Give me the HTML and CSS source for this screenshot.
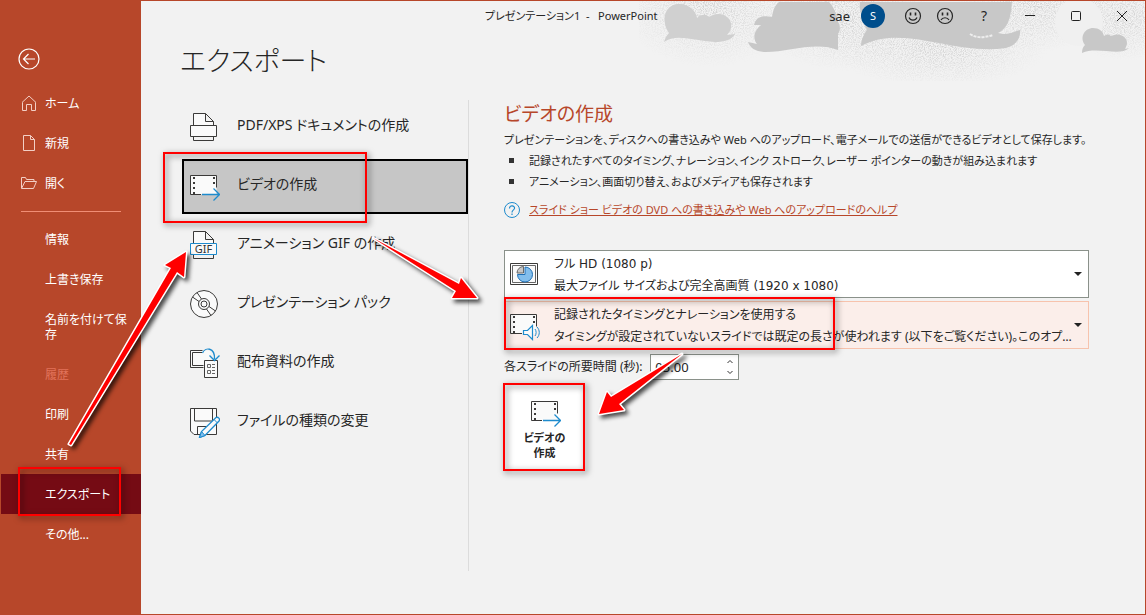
FILE: index.html
```html
<!DOCTYPE html>
<html lang="ja">
<head>
<meta charset="utf-8">
<meta name="viewport" content="width=device-width, initial-scale=1">
<title>プレゼンテーション1 - PowerPoint</title>
<link rel="stylesheet" href="styles.css">
</head>
<body>
<svg class="defs" aria-hidden="true">
  <defs>
    <symbol id="film-arrow" viewBox="0 0 32 32">
      <path d="M2.500 5.500h26v19h-26z" fill="#fafafa" stroke="none"/>
      <path d="M13 24.500H2.500v-19h26v12" fill="none" stroke="#3b3a39"/>
      <path d="M6 7v17M26 7v10" fill="none" stroke="#3b3a39" stroke-width="2" stroke-dasharray="2 3"/>
      <path d="M14 24.500h17M25.500 18.500l6 6-6 6" fill="none" stroke="#1e8bcd" stroke-width="1.300"/>
    </symbol>
  </defs>
</svg>
<div class="window">
  <nav class="sidebar" aria-label="ファイル">
    <button class="back" type="button" aria-label="戻る">
      <svg width="22" height="22" viewBox="0 0 22 22" fill="none" stroke="#fff" stroke-width="1.200"><circle cx="11" cy="11" r="10"/><path d="M17 11H6M10.500 6L5.500 11l5 5"/></svg>
    </button>
    <a class="nav-item" href="#home"><svg width="16" height="16" viewBox="0 0 16 16" fill="none" stroke="#f3cfc5"><path d="M1 7.500L8 1l7 6.500M1.500 7.500v8h4v-6h5v6h4v-8"/></svg>ホーム</a>
    <a class="nav-item" href="#new"><svg width="16" height="16" viewBox="0 0 16 16" fill="none" stroke="#f3cfc5"><path d="M2.500.5h7l4 4v11h-11zM9.500.5v4h4"/></svg>新規</a>
    <a class="nav-item" href="#open"><svg width="16" height="16" viewBox="0 0 16 16" fill="none" stroke="#f3cfc5"><path d="M.5 13V2.500h4l1 2h7.500v2M.5 13.500L4 6.500h11.500l-3 7z"/></svg>開く</a>
    <hr class="nav-line">
    <a class="nav-item text-only" href="#info">情報</a>
    <a class="nav-item text-only" href="#save">上書き保存</a>
    <a class="nav-item text-only" href="#saveas">名前を付けて保存</a>
    <a class="nav-item text-only disabled" aria-disabled="true" href="#history">履歴</a>
    <a class="nav-item text-only" href="#print">印刷</a>
    <a class="nav-item text-only" href="#share">共有</a>
    <a class="nav-item text-only current" aria-current="page" href="#export">エクスポート</a>
    <a class="nav-item text-only" href="#more">その他...</a>
  </nav>

  <div class="main">
    <svg class="clouds" viewBox="0 0 506 80" width="506" height="80" aria-hidden="true">
      <defs>
        <filter id="grain" x="0" y="0" width="100%" height="100%">
          <feTurbulence type="fractalNoise" baseFrequency=".9" numOctaves="2" seed="4"/>
          <feColorMatrix values="0 0 0 0 .6  0 0 0 0 .6  0 0 0 0 .6  3 0 0 0 -1.200"/>
          <feComposite in2="SourceGraphic" operator="in"/>
        </filter>
        <radialGradient id="fade"><stop offset="0" stop-color="#000" stop-opacity=".9"/><stop offset="1" stop-color="#000" stop-opacity="0"/></radialGradient>
      </defs>
      <g filter="url(#grain)">
        <ellipse cx="70" cy="6" rx="90" ry="60" fill="url(#fade)"/>
        <ellipse cx="205" cy="15" rx="90" ry="55" fill="url(#fade)"/>
        <ellipse cx="300" cy="45" rx="110" ry="42" fill="url(#fade)"/>
        <ellipse cx="395" cy="6" rx="80" ry="45" fill="url(#fade)"/>
        <ellipse cx="485" cy="15" rx="60" ry="45" fill="url(#fade)"/>
      </g>
      <circle cx="440" cy="21" r="24" fill="#f0f0f0"/>
      <path d="M25 41c1-4 3-7 5-9C22 20 25 5 38 3c12-1 19 7 20 14 4-4 9-4 12-1 8-6 20-3 22 6 1 5-1 9-4 12l8-1c-3 6-11 8-20 8-22-1-38-9-51 0z" fill="#d0d0d0"/>
      <path d="M115 24c2-9 10-10 18-8 1-7 3-12 7-15h50c5 5 8 13 9 20 2 3 3 8 0 12 0 4 0 9 0 16-22-9-50 2-72 2-10 0-16-4-18-10l9 2c-4-5-4-12 4-19z" fill="#c8c8c8"/>
      <path d="M221 1h152c-1 17-5 27-14 31 10 3 17-2 22-3 1 9-5 16-14 18-51 8-103-25-145-2 0-6 3-12 6-16-4-9-8-18-7-28z" fill="#c8c8c8"/>
      <path d="M331 33c7 5 17 3 23 1" fill="none" stroke="#eee" stroke-width="2" stroke-dasharray="3 1"/>
      <path d="M443 52c0-4 1-6 3-8-6-8 0-17 8-17 6 0 10 3 11 8 3-2 5-2 7 0 8-4 16 0 16 7 0 2-1 4-2 6l4-1c-9 9-32-2-47 5z" fill="#c8c8c8"/>
    </svg>

    <header class="titlebar">
      <div class="doc-name">プレゼンテーション1&nbsp; -&nbsp;&nbsp; PowerPoint</div>
      <div class="account"><span>sae</span><span class="avatar">S</span></div>
      <button class="face" type="button" aria-label="スマイル"><svg width="18" height="18" viewBox="0 0 18 18" fill="none" stroke="#262626" stroke-width="1.200"><circle cx="9" cy="9" r="7.500"/><path d="M5 10.500c1.500 3.500 6.500 3.500 8 0"/><path d="M6.500 5.500v3M11.500 5.500v3" stroke-width="1.600"/></svg></button>
      <button class="face" type="button" aria-label="しかめ面"><svg width="18" height="18" viewBox="0 0 18 18" fill="none" stroke="#262626" stroke-width="1.200"><circle cx="9" cy="9" r="7.500"/><path d="M5 13c1.500-3 6.500-3 8 0"/><path d="M6.500 5.500v3M11.500 5.500v3" stroke-width="1.600"/></svg></button>
      <button class="win" type="button" aria-label="ヘルプ">?</button>
      <button class="win" type="button" aria-label="最小化"><svg width="12" height="12" viewBox="0 0 12 12"><path d="M1 5.500h10" stroke="#222"/></svg></button>
      <button class="win" type="button" aria-label="最大化"><svg width="12" height="12" viewBox="0 0 12 12"><rect x="1.500" y="1.500" width="9" height="9" rx="1" fill="none" stroke="#222"/></svg></button>
      <button class="win" type="button" aria-label="閉じる"><svg width="12" height="12" viewBox="0 0 12 12"><path d="M1 1l10 10M11 1L1 11" stroke="#222"/></svg></button>
    </header>

    <h1 class="page-title">エクスポート</h1>

    <div class="columns">
      <div class="export-list">
        <button class="export-item" type="button"><svg width="32" height="32" viewBox="0 0 32 32" fill="#fafafa" stroke="#3b3a39"><path d="M5.500 15V2.500h12l8 8V15M17.500 2.500v8h8"/><path d="M2.500 14.500h26v11h-26z"/><path d="M5.500 26v3.500h20V26" fill="none"/></svg><span>PDF/XPS ドキュメントの作成</span></button>
        <button class="export-item selected" type="button"><svg width="32" height="32"><use href="#film-arrow"/></svg><span>ビデオの作成</span></button>
        <button class="export-item" type="button"><svg width="32" height="32" viewBox="0 0 32 32" fill="#fafafa" stroke="#3b3a39"><path d="M5.500 14V2.500h12l8 8V14M17.500 2.500v8h8"/><path d="M5.500 25v4.500h20V25" fill="none"/><path d="M2.500 14.500h26v11h-26z" stroke="#1e8bcd"/><text class="gif" x="15.500" y="24" text-anchor="middle">GIF</text></svg><span>アニメーション GIF の作成</span></button>
        <button class="export-item" type="button"><svg width="32" height="32" viewBox="0 0 32 32" fill="none" stroke="#3b3a39"><circle cx="16" cy="16" r="13.500" fill="#fafafa"/><circle cx="16" cy="16" r="5.500"/><circle cx="16" cy="16" r="3"/><path d="M9 4.500l4.500 6.500M4.500 9l6.500 4.500M23 27.500L18.500 21M27.500 23L21 18.500"/></svg><span>プレゼンテーション パック</span></button>
        <button class="export-item" type="button"><svg width="32" height="32" viewBox="0 0 32 32" fill="none" stroke="#3b3a39"><path d="M2.500 3.500h20v17h-20z" fill="#fafafa" stroke="none"/><path d="M14.500 3.500h-12v17h13M14 5.500H4.500v13h11"/><path d="M16.500 13.500h13v17h-13z" fill="#fafafa"/><path d="M19.500 17.500h3v3h-3zM19.500 23.500h3v3h-3zM24 17.500h3M24 20.500h3M24 23.500h3M24 26.500h3" stroke="#666"/><path d="M14.500 6C17 0 27 0 26.500 12M21.500 8.500l5 5 5-5" stroke="#1e8bcd" stroke-width="1.300"/></svg><span>配布資料の作成</span></button>
        <button class="export-item" type="button"><svg width="32" height="32" viewBox="0 0 32 32" fill="none" stroke="#3b3a39"><path d="M2.500 2.500h26v26H6l-3.500-3.500z" fill="#fafafa"/><path d="M6.500 3v12h18V3M9.500 28v-7.500h12"/><path d="M11.500 31.500l2-6L28 11.500c2-1 4.500 1.500 3 3.500L17 29.500z" fill="#fafafa" stroke="#1e8bcd" stroke-width="1.300"/><path d="M11.500 31.500l2-6 3.500 4z" fill="#83beec" stroke="#1e8bcd"/><path d="M26 13.500l3.500 3.500" stroke="#1e8bcd"/></svg><span>ファイルの種類の変更</span></button>
      </div>

      <section class="detail">
        <h2>ビデオの作成</h2>
        <p class="lead">プレゼンテーションを、ディスクへの書き込みや Web へのアップロード、電子メールでの送信ができるビデオとして保存します。</p>
        <ul class="notes">
          <li>記録されたすべてのタイミング、ナレーション、インク ストローク、レーザー ポインターの動きが組み込まれます</li>
          <li>アニメーション、画面切り替え、およびメディアも保存されます</li>
        </ul>
        <div class="help">
          <svg width="16" height="16" viewBox="0 0 16 16" fill="none" stroke="#1e8bcd"><circle cx="8" cy="8" r="7.500"/><path d="M5.500 6.500c0-4 5.500-3 5 0-.3 1.500-2.500 1.500-2.500 4M8 11.500v1.500" stroke-width="1.200"/></svg>
          <a href="#help">スライド ショー ビデオの DVD への書き込みや Web へのアップロードのヘルプ</a>
        </div>

        <div class="combo">
          <svg class="combo-icon" width="32" height="32" viewBox="0 0 32 32" fill="none" stroke="#3b3a39"><path d="M2.500 5.500h27v21h-27z" fill="#fff"/><path d="M4.500 7.500h23v17h-23z" fill="#fafafa" stroke="#666"/><path d="M17 9a7.500 7.500 0 1 1-7.500 7.500H17z" fill="#83beec" stroke="#1e6fb5"/><path d="M15.500 15V8.500A6.500 6.500 0 0 0 9 15z" fill="#c8c8c8" stroke="#666"/></svg>
          <select aria-label="ビデオの品質"><option>フル HD (1080 p)</option></select>
          <span class="combo-note">最大ファイル サイズおよび完全高画質 (1920 x 1080)</span>
        </div>
        <div class="combo hot">
          <svg class="combo-icon" width="32" height="32" viewBox="0 0 32 32" fill="none" stroke="#3b3a39"><path d="M2.500 5.500h26v19h-26z" fill="#fafafa" stroke="none"/><path d="M14 24.500H2.500v-19h26v12"/><path d="M6 7v17M26 7v9" stroke-width="2" stroke-dasharray="2 3"/><path d="M15.500 21.500h4l5-5v14l-5-5h-4z" fill="#fafafa" stroke="#1e8bcd" stroke-width="1.200"/><path d="M27 20c1.500 2 1.500 5 0 7M29 18c3 3 3 8 0 11" stroke="#1e8bcd"/></svg>
          <select aria-label="タイミングとナレーション"><option>記録されたタイミングとナレーションを使用する</option></select>
          <span class="combo-note">タイミングが設定されていないスライドでは既定の長さが使われます (以下をご覧ください)。このオプ…</span>
        </div>

        <div class="duration">
          <label for="secs">各スライドの所要時間 (秒):</label>
          <div class="spinner">
            <input id="secs" type="text" value="05.00">
            <div class="steps">
              <button type="button" aria-label="増やす"><svg width="8" height="5" viewBox="0 0 8 5"><path d="M1.500 4L4 1.500 6.500 4" fill="none" stroke="#333"/></svg></button>
              <button type="button" aria-label="減らす"><svg width="8" height="5" viewBox="0 0 8 5"><path d="M1.500 1L4 3.500 6.500 1" fill="none" stroke="#333"/></svg></button>
            </div>
          </div>
        </div>

        <button class="create" type="button"><svg width="32" height="32"><use href="#film-arrow"/></svg><span>ビデオの<br>作成</span></button>
      </section>
    </div>
  </div>

  <svg class="marks" width="1146" height="615" viewBox="0 0 1146 615" aria-hidden="true">
    <g class="mark-box">
      <rect x="164" y="153" width="202" height="69"/>
      <rect x="19" y="468" width="101" height="47"/>
      <rect x="505" y="298" width="329" height="51"/>
      <rect x="504" y="384" width="80" height="86"/>
    </g>
    <g class="mark-arrow">
      <path d="M186 252l-2 25-7-5L71 445l-2-1L171 268l-6-3z"/>
      <path d="M477 298l-25 0 4-7L373 238l86 46 2-6z"/>
      <path d="M599 414l8-22 4 5 71-43-63 50 5 6z"/>
    </g>
  </svg>
</div>
</body>
</html>
```
FILE: styles.css
```css
* { box-sizing: border-box; }

body {
  margin: 0;
  color: #262626;
  background: #f2f2f2;
  font: 12px/16px "Noto Sans", "Noto Sans CJK JP", sans-serif;
  font-feature-settings: "palt";
}

button, input, select { font: inherit; font-feature-settings: inherit; color: inherit; }
button { border: 0; padding: 0; background: none; }
svg { flex: none; display: block; }
.defs { position: absolute; width: 0; height: 0; }

.window {
  position: relative;
  display: grid;
  grid-template-columns: 140px minmax(0, 1fr);
  min-height: 100vh;
  border: 1px solid #b7472a;
  overflow: hidden;
}

/* Sidebar */
.sidebar { background: #b7472a; padding-top: 47px; }
.back { display: block; margin: 0 0 13px 17px; }
.nav-item {
  display: flex;
  align-items: center;
  gap: 8px;
  min-height: 40px;
  padding: 12px 12px 12px 20px;
  color: #fff;
  line-height: 15px;
  text-decoration: none;
}
.text-only { padding: 13px 12px 12px 44px; }
.disabled { color: #e2735a; }
.current { background: #750b14; }
.nav-line { height: 1px; margin: 8px 20px 7px; border: 0; background: #f08e75; }

/* Main area */
.main { position: relative; }
.clouds { position: absolute; top: 0; right: 0; }

.titlebar {
  position: relative;
  display: flex;
  align-items: center;
  height: 30px;
}
.doc-name { flex: 1; padding-left: 344px; font-size: 11px; white-space: nowrap; }
.account { display: flex; align-items: center; gap: 11px; margin-right: 12px; font-size: 13px; }
.avatar {
  width: 24px;
  height: 24px;
  border-radius: 50%;
  background: #004e8c;
  color: #fff;
  font-size: 11px;
  line-height: 24px;
  text-align: center;
}
.face { display: grid; place-items: center; width: 32px; height: 30px; }
.win { display: grid; place-items: center; width: 46px; height: 30px; font-size: 14px; }

.page-title {
  margin: 8px 0 17px 39px;
  font-size: 27px;
  font-weight: 300;
  line-height: 44px;
}

.columns { display: flex; }
.export-list {
  flex: none;
  display: flex;
  flex-direction: column;
  gap: 4px;
  width: 328px;
  min-height: 471px;
  padding-left: 41px;
  border-right: 1px solid #dcdcdc;
}
.export-item {
  display: flex;
  align-items: center;
  gap: 17px;
  height: 55px;
  padding-left: 4px;
  border: 2px solid transparent;
  font-size: 14px;
  white-space: nowrap;
}
.export-item svg { margin-bottom: 2px; }
.export-item span { padding-bottom: 5px; }
.selected { background: #c6c6c6; border-color: #000; }
.gif { font: 11px "Noto Sans", sans-serif; fill: #333; stroke: none; }

.detail { flex: 1; min-width: 0; padding: 0 56px 0 35px; }
.detail h2 {
  margin: 0 0 2px;
  color: #b7472a;
  font-size: 19px;
  font-weight: 400;
  line-height: 28px;
}
.lead { margin: 0; font-size: 11px; line-height: 20px; white-space: nowrap; }
.notes { margin: 0; padding: 0; list-style: none; font-size: 11px; line-height: 21px; white-space: nowrap; }
.notes li { display: flex; align-items: center; gap: 15px; padding-left: 5px; }
.notes li::before { content: ""; width: 5px; height: 5px; background: #333; }
.help { display: flex; align-items: center; gap: 9px; margin: 9px 0 31px; height: 18px; font-size: 11px; }
.help a { color: #b7472a; white-space: nowrap; }

.combo {
  position: relative;
  display: grid;
  grid-template-columns: 32px minmax(0, 1fr);
  grid-template-rows: 22px 22px;
  column-gap: 14px;
  align-items: center;
  height: 48px;
  margin-bottom: 3px;
  padding: 2px 12px 0 3px;
  border: 1px solid #8a918a;
  background: #fff;
  font-family: "DejaVu Sans", "Noto Sans CJK JP", sans-serif;
}
.combo::after {
  content: "";
  position: absolute;
  top: 21px;
  right: 6px;
  border: 4px solid transparent;
  border-top-color: #222;
  border-bottom: 0;
}
.combo.hot {
  border-color: #f7c3ad;
  background: #fbeeea;
  font-family: "Noto Sans", "Noto Sans CJK JP", sans-serif;
}
.combo-icon { grid-row: 1 / 3; margin-bottom: 2px; }
.combo select { appearance: none; width: 100%; padding: 0; border: 0; background: none; }
.combo-note { overflow: hidden; text-overflow: ellipsis; white-space: nowrap; }

.duration { display: flex; align-items: center; gap: 8px; height: 30px; margin-bottom: 2px; }
.spinner {
  display: flex;
  width: 89px;
  height: 26px;
  border: 1px solid #8a918a;
  background: #fff;
}
.spinner input { flex: 1; min-width: 0; padding: 0 4px; border: 0; background: none; font-size: 13px; }
.steps { display: grid; width: 16px; padding: 1px 0; }
.steps button { display: grid; place-items: center; }

.create {
  display: flex;
  flex-direction: column;
  align-items: center;
  gap: 2px;
  width: 81px;
  height: 87px;
  padding-top: 12px;
  background: #fff;
  font-size: 11px;
  font-weight: 700;
  line-height: 15px;
}

/* Callouts drawn over the window */
.marks { position: absolute; top: -1px; left: -1px; pointer-events: none; }
.mark-box { fill: none; stroke: #f00; stroke-width: 2; filter: drop-shadow(2px 2px 3px rgba(0, 0, 0, .6)); }
.mark-arrow {
  fill: #f00;
  stroke: #fff;
  stroke-width: 3;
  stroke-linejoin: round;
  paint-order: stroke;
  filter: drop-shadow(3px 3px 2px rgba(0, 0, 0, .7));
}
```
